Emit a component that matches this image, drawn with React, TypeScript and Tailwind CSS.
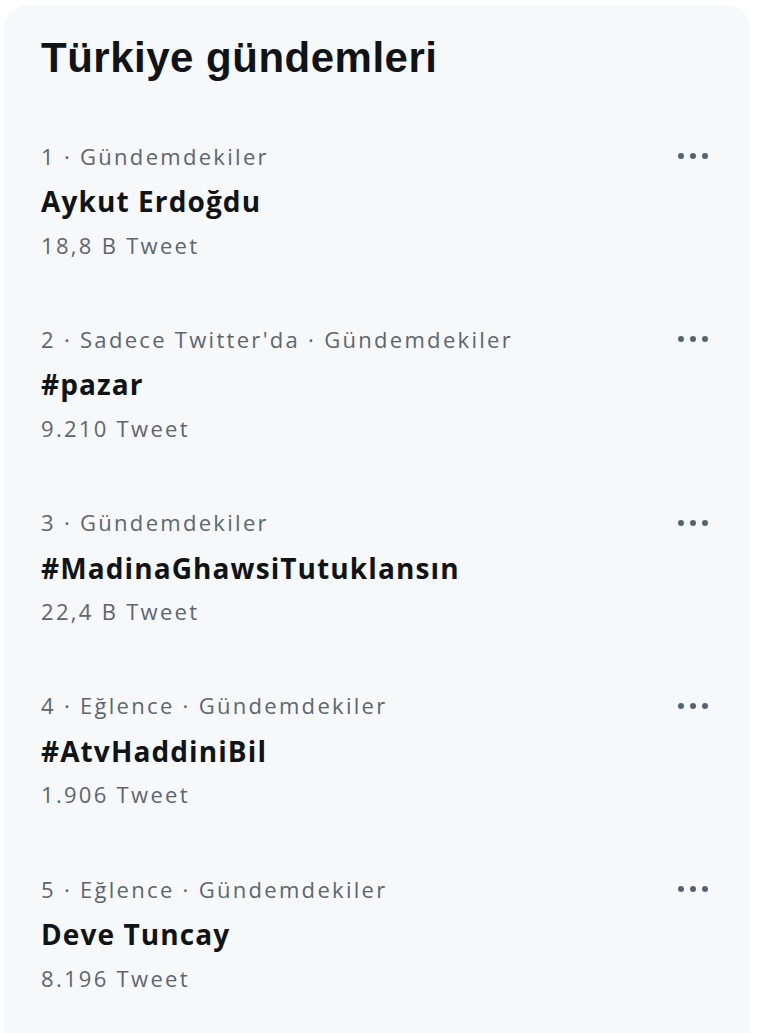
import React from "react";

type Trend = {
  meta: string;
  name: string;
  count: string;
};

const trends: Trend[] = [
  { meta: "1 · Gündemdekiler", name: "Aykut Erdoğdu", count: "18,8 B Tweet" },
  { meta: "2 · Sadece Twitter'da · Gündemdekiler", name: "#pazar", count: "9.210 Tweet" },
  { meta: "3 · Gündemdekiler", name: "#MadinaGhawsiTutuklansın", count: "22,4 B Tweet" },
  { meta: "4 · Eğlence · Gündemdekiler", name: "#AtvHaddiniBil", count: "1.906 Tweet" },
  { meta: "5 · Eğlence · Gündemdekiler", name: "Deve Tuncay", count: "8.196 Tweet" },
];

const MoreDots = () => (
  <div className="flex items-center gap-[6px] pr-[42px]">
    <span className="block h-[6px] w-[6px] rounded-full bg-[#536471]" />
    <span className="block h-[6px] w-[6px] rounded-full bg-[#536471]" />
    <span className="block h-[6px] w-[6px] rounded-full bg-[#536471]" />
  </div>
);

const App = () => {
  return (
    <div className="h-[1033px] w-[760px] overflow-hidden bg-white">
      <div
        className="ml-[4px] mt-[5px] h-[1100px] w-[746px] rounded-t-[24px] bg-[#f7f8f9] pl-[37px]"
        style={{ fontFamily: '"Open Sans", "Liberation Sans", sans-serif' }}
      >
        <h2
          className="pt-[28px] text-[42px] font-bold leading-[50px] tracking-[0.5px] text-[#0f1419]"
          style={{ fontFamily: '"Liberation Sans", Arial, sans-serif' }}
        >
          Türkiye gündemleri
        </h2>
        <div className="mt-[50px]">
          {trends.map(t => (
            <div key={t.name} className="h-[183.3px]">
              <div className="flex h-[46px] items-center justify-between">
                <span className="text-[22px] tracking-[2.3px] text-[#5b6670]">{t.meta}</span>
                <MoreDots />
              </div>
              <div className="flex h-[44px] items-center text-[28px] font-bold tracking-[1.1px] text-[#0f1419]">
                {t.name}
              </div>
              <div className="flex h-[44px] items-center text-[22px] tracking-[2.3px] text-[#5b6670]">
                {t.count}
              </div>
            </div>
          ))}
        </div>
      </div>
    </div>
  );
};

export default App;
